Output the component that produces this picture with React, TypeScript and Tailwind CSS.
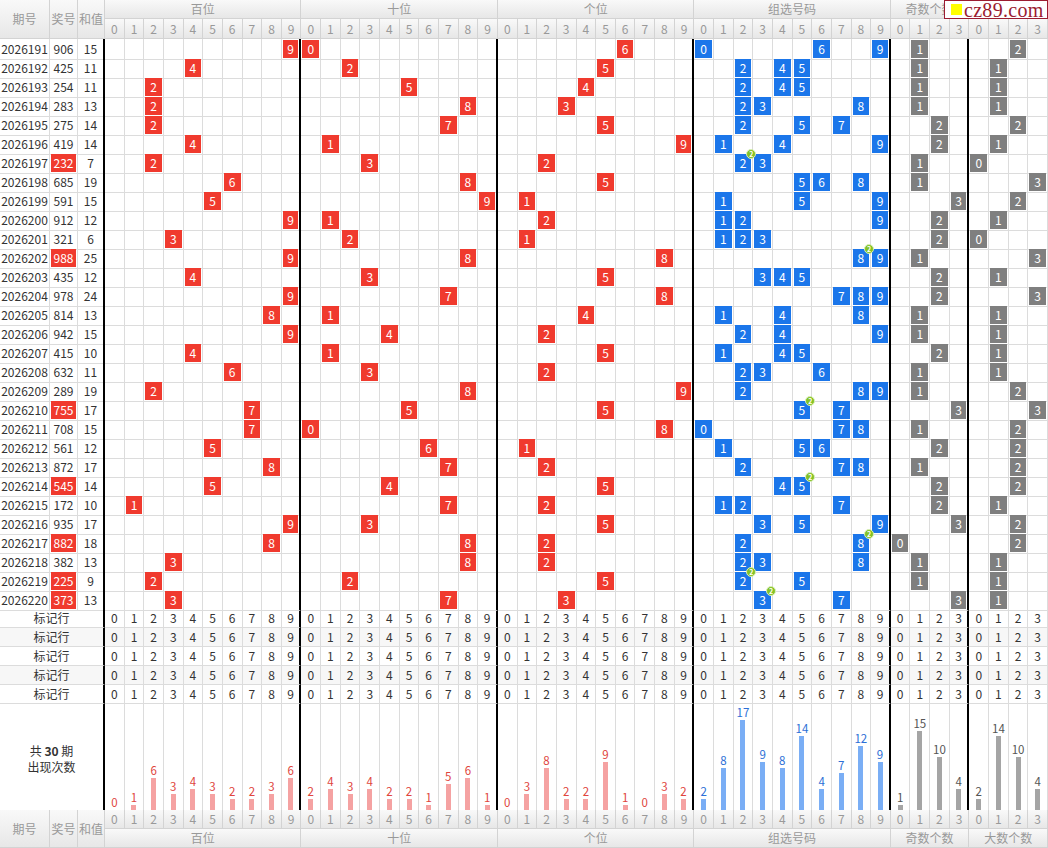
import React from "react";

const rows: [string, string, number][] = [
  ["2026191", "906", 15],
  ["2026192", "425", 11],
  ["2026193", "254", 11],
  ["2026194", "283", 13],
  ["2026195", "275", 14],
  ["2026196", "419", 14],
  ["2026197", "232", 7],
  ["2026198", "685", 19],
  ["2026199", "591", 15],
  ["2026200", "912", 12],
  ["2026201", "321", 6],
  ["2026202", "988", 25],
  ["2026203", "435", 12],
  ["2026204", "978", 24],
  ["2026205", "814", 13],
  ["2026206", "942", 15],
  ["2026207", "415", 10],
  ["2026208", "632", 11],
  ["2026209", "289", 19],
  ["2026210", "755", 17],
  ["2026211", "708", 15],
  ["2026212", "561", 12],
  ["2026213", "872", 17],
  ["2026214", "545", 14],
  ["2026215", "172", 10],
  ["2026216", "935", 17],
  ["2026217", "882", 18],
  ["2026218", "382", 13],
  ["2026219", "225", 9],
  ["2026220", "373", 13],
];

const GRID = "grid grid-cols-[50px_28px_27px_repeat(48,minmax(0,1fr))]";
const sectionEnd = new Set([2, 12, 22, 32, 42, 46]);

function bR(i: number) {
  return sectionEnd.has(i) ? "border-r-2 border-r-black" : "border-r border-r-[#dcdcdc]";
}

function colValue(i: number) {
  if (i >= 3 && i <= 32) return (i - 3) % 10;
  if (i >= 33 && i <= 42) return i - 33;
  if (i >= 43 && i <= 46) return i - 43;
  return i - 47;
}

function kind(i: number): "red" | "blue" | "gray" {
  if (i <= 32) return "red";
  if (i <= 42) return "blue";
  return "gray";
}

type Info = {
  d: number[];
  odd: number;
  big: number;
  cnt: number[];
};

function info(n: string): Info {
  const d = n.split("").map((c) => parseInt(c, 10));
  const cnt = Array(10).fill(0);
  d.forEach((x) => cnt[x]++);
  return {
    d,
    odd: d.filter((x) => x % 2 === 1).length,
    big: d.filter((x) => x >= 5).length,
    cnt,
  };
}

function cellHit(i: number, inf: Info): { hit: boolean; badge: boolean } {
  const v = colValue(i);
  if (i >= 3 && i <= 12) return { hit: inf.d[0] === v, badge: false };
  if (i >= 13 && i <= 22) return { hit: inf.d[1] === v, badge: false };
  if (i >= 23 && i <= 32) return { hit: inf.d[2] === v, badge: false };
  if (i >= 33 && i <= 42) return { hit: inf.cnt[v] > 0, badge: inf.cnt[v] === 2 };
  if (i >= 43 && i <= 46) return { hit: inf.odd === v, badge: false };
  return { hit: inf.big === v, badge: false };
}

const boxBg = {
  red: "bg-[#f03a2e]",
  blue: "bg-[#1b76ea]",
  gray: "bg-[#7f7f7f]",
};

const cols = Array.from({ length: 48 }, (_, k) => k + 3);

function HeaderCell({ children, className = "" }: { children?: React.ReactNode; className?: string }) {
  return (
    <div
      className={`flex items-center justify-center bg-gradient-to-b from-[#f9f9f9] to-[#e7e7e7] text-[#999] border-r border-b border-[#d3d3d3] ${className}`}
    >
      {children}
    </div>
  );
}

function TopHeader() {
  return (
    <div className={`${GRID} grid-rows-[19px_20px] text-[12px]`}>
      <HeaderCell className="row-span-2 text-[#888]">期号</HeaderCell>
      <HeaderCell className="row-span-2 text-[#888]">奖号</HeaderCell>
      <HeaderCell className="row-span-2 text-[#888]">和值</HeaderCell>
      <HeaderCell className="col-span-10">百位</HeaderCell>
      <HeaderCell className="col-span-10">十位</HeaderCell>
      <HeaderCell className="col-span-10">个位</HeaderCell>
      <HeaderCell className="col-span-10">组选号码</HeaderCell>
      <HeaderCell className="col-span-4">奇数个数</HeaderCell>
      <HeaderCell className="col-span-4">大数个数</HeaderCell>
      {cols.map((i) => (
        <HeaderCell key={i}>{colValue(i)}</HeaderCell>
      ))}
    </div>
  );
}

function BottomHeader() {
  return (
    <div className={`${GRID} grid-rows-[19px_19px] text-[12px]`}>
      <HeaderCell className="row-span-2 text-[#888] row-start-1 col-start-1">期号</HeaderCell>
      <HeaderCell className="row-span-2 text-[#888] row-start-1 col-start-2">奖号</HeaderCell>
      <HeaderCell className="row-span-2 text-[#888] row-start-1 col-start-3">和值</HeaderCell>
      {cols.map((i) => (
        <HeaderCell key={i} className="row-start-1">
          {colValue(i)}
        </HeaderCell>
      ))}
      <HeaderCell className="col-span-10 row-start-2 col-start-4">百位</HeaderCell>
      <HeaderCell className="col-span-10 row-start-2">十位</HeaderCell>
      <HeaderCell className="col-span-10 row-start-2">个位</HeaderCell>
      <HeaderCell className="col-span-10 row-start-2">组选号码</HeaderCell>
      <HeaderCell className="col-span-4 row-start-2">奇数个数</HeaderCell>
      <HeaderCell className="col-span-4 row-start-2">大数个数</HeaderCell>
    </div>
  );
}

function DataRow({ r }: { r: [string, string, number] }) {
  const [id, num, sum] = r;
  const inf = info(num);
  const pair = inf.cnt.some((c) => c === 2);
  const base = "border-b border-b-[#dcdcdc] flex items-center justify-center";
  return (
    <div className={`${GRID} h-[19px] text-[12px] text-[#333]`}>
      <div className={`${bR(0)} ${base}`}>{id}</div>
      <div className={`${bR(1)} ${base} p-px`}>
        {pair ? (
          <div className="w-full h-full bg-[#f03a2e] text-white flex items-center justify-center">{num}</div>
        ) : (
          num
        )}
      </div>
      <div className={`${bR(2)} ${base}`}>{sum}</div>
      {cols.map((i) => {
        const h = cellHit(i, inf);
        return (
          <div key={i} className={`${bR(i)} ${base} p-px relative`}>
            {h.hit && (
              <div className={`w-full h-full ${boxBg[kind(i)]} text-white flex items-center justify-center`}>
                {colValue(i)}
              </div>
            )}
            {h.badge && (
              <div className="absolute -top-[4px] -right-[4px] z-10 w-[10px] h-[10px] rounded-full bg-[#84c225] border border-[#d9efb8] text-white text-[7px] leading-none font-bold flex items-center justify-center">
                2
              </div>
            )}
          </div>
        );
      })}
    </div>
  );
}

function MarkRow({ alt }: { alt: boolean }) {
  const base = "border-b border-b-[#dcdcdc] flex items-center justify-center";
  return (
    <div className={`${GRID} h-[19px] text-[12px] text-[#333] ${alt ? "bg-[#f7f7f7]" : "bg-white"}`}>
      <div className={`col-span-3 ${bR(2)} ${base}`}>标记行</div>
      {cols.map((i) => (
        <div key={i} className={`${bR(i)} ${base}`}>
          {colValue(i)}
        </div>
      ))}
    </div>
  );
}

const barBg = {
  red: "bg-[#f5a2a2]",
  blue: "bg-[#7aaef5]",
  gray: "bg-[#a5a5a5]",
};
const barText = {
  red: "text-[#e0453d]",
  blue: "text-[#2d6fd6]",
  gray: "text-[#555]",
};

function StatsRow() {
  const infos = rows.map((r) => info(r[1]));
  const count = (i: number) => {
    if (i >= 33 && i <= 42) {
      const v = colValue(i);
      return infos.reduce((s, inf) => s + inf.cnt[v], 0);
    }
    return infos.filter((inf) => cellHit(i, inf).hit).length;
  };
  return (
    <div className={`${GRID} h-[106px] text-[#333]`}>
      <div className={`col-span-3 ${bR(2)} flex flex-col items-center justify-center text-[12px] leading-[16px] pt-[4px]`}>
        <div>
          共 <span className="font-bold">30</span> 期
        </div>
        <div>出现次数</div>
      </div>
      {cols.map((i) => {
        const n = count(i);
        const k = kind(i);
        return (
          <div key={i} className={`${bR(i)} flex flex-col items-center justify-end`}>
            <div className={`text-[11.5px] leading-[12px] mb-[2px] ${barText[k]}`}>{n}</div>
            {n > 0 && <div className={`w-[5px] ${barBg[k]}`} style={{ height: `${n * 5.3}px` }} />}
          </div>
        );
      })}
    </div>
  );
}

function Logo() {
  return (
    <div className="absolute top-0 right-0 z-20 h-[19px] w-[104px] bg-white border border-[#9b1c31] flex items-center pl-[6px] gap-[2px]">
      <div className="w-[11px] h-[11px] bg-[#ffff00] shrink-0" />
      <span className="text-[#9b1c31] text-[20px] leading-none tracking-[0.3px]" style={{ fontFamily: '"Liberation Serif", serif' }}>
        cz89.com
      </span>
    </div>
  );
}

export default function App() {
  return (
    <div
      className="relative w-[1048px] h-[848px] overflow-hidden bg-white"
      style={{ fontFamily: '"Noto Sans CJK SC", "Noto Sans", sans-serif' }}
    >
      <Logo />
      <TopHeader />
      {rows.map((r) => (
        <DataRow key={r[0]} r={r} />
      ))}
      {[0, 1, 2, 3, 4].map((k) => (
        <MarkRow key={k} alt={k % 2 === 1} />
      ))}
      <StatsRow />
      <BottomHeader />
    </div>
  );
}
